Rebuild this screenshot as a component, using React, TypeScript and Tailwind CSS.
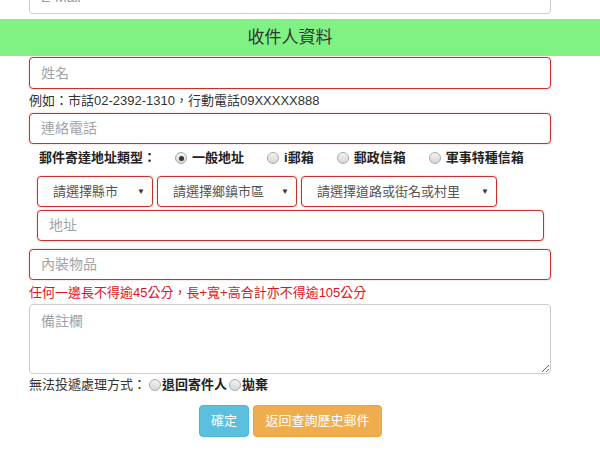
import React from "react";

const font = { fontFamily: '"Liberation Sans", "Noto Sans CJK TC", sans-serif' };

function Radio({ checked }: { checked?: boolean }) {
  return (
    <span className="inline-flex items-center justify-center w-[12px] h-[12px] rounded-full border border-[#a9a9a9] bg-gradient-to-b from-[#f4f4f4] to-[#d6d6d6] shrink-0">
      {checked && <span className="w-[5px] h-[5px] rounded-full bg-[#333]" />}
    </span>
  );
}

function RedInput({ placeholder, className = "" }: { placeholder: string; className?: string }) {
  return (
    <div
      className={`h-[31px] border border-[#c9302c] rounded-[4px] flex items-center px-[11px] text-[14px] text-[#a3a3a3] bg-white shadow-[0_0_2px_rgba(201,48,44,0.35)] ${className}`}
    >
      {placeholder}
    </div>
  );
}

function FakeSelect({ label, width }: { label: string; width: string }) {
  return (
    <div
      className={`${width} h-[31px] border border-[#c9302c] rounded-[4px] flex items-center justify-between pl-[15px] pr-[7px] text-[13px] text-[#555] bg-white shadow-[0_0_2px_rgba(201,48,44,0.35)]`}
    >
      <span>{label}</span>
      <span className="text-[8px] text-[#333]">▼</span>
    </div>
  );
}

export default function App() {
  const options = [
    { label: "一般地址", checked: true },
    { label: "i郵箱" },
    { label: "郵政信箱" },
    { label: "軍事特種信箱" },
  ];

  return (
    <div className="w-[600px] h-[450px] overflow-hidden bg-white text-[#333]" style={font}>
      {/* E-Mail (cut off at top) */}
      <div className="pl-[29px]">
        <div className="-mt-[20px] h-[34px] border border-[#ccc] rounded-[4px] flex items-center px-[11px] text-[14px] text-[#999] w-[522px]">
          E-Mail
        </div>
      </div>

      {/* Section header */}
      <div className="mt-[5px] h-[37px] bg-[#80f283] flex items-center justify-center text-[17px] text-[#333]">
        <span className="-ml-[20px]">收件人資料</span>
      </div>

      <div className="pl-[29px] w-[551px]">
        <RedInput placeholder="姓名" className="mt-[1px] h-[32px]" />

        <div className="h-[24px] leading-[24px] text-[13px]">例如：市話02-2392-1310，行動電話09XXXXX888</div>

        <RedInput placeholder="連絡電話" />

        {/* Address type radios */}
        <div className="h-[28px] flex items-center pl-[10px] text-[13px] font-bold text-[#222]">
          <span className="mr-[19px]">郵件寄達地址類型：</span>
          {options.map((o) => (
            <span key={o.label} className="flex items-center mr-[23px]">
              <Radio checked={o.checked} />
              <span className="ml-[5px]">{o.label}</span>
            </span>
          ))}
        </div>

        {/* City / district / road selects */}
        <div className="pl-[8px]">
          <div className="mt-[4px] flex gap-[4px]">
            <FakeSelect label="請選擇縣市" width="w-[116px]" />
            <FakeSelect label="請選擇鄉鎮市區" width="w-[140px]" />
            <FakeSelect label="請選擇道路或街名或村里" width="w-[196px]" />
          </div>
          <RedInput placeholder="地址" className="mt-[3px] w-[507px]" />
        </div>

        <RedInput placeholder="內裝物品" className="mt-[8px]" />

        <div className="h-[24px] leading-[26px] text-[13px] text-[#dd1419]">
          任何一邊長不得逾45公分，長+寬+高合計亦不得逾105公分
        </div>

        <textarea
          readOnly
          placeholder="備註欄"
          className="block w-[522px] h-[70px] border border-[#ccc] rounded-[4px] px-[11px] py-[6px] text-[14px] placeholder:text-[#a3a3a3] outline-none"
          style={font}
        />

        {/* Undeliverable handling */}
        <div className="h-[22px] flex items-center text-[13px]">
          <span className="text-[#333]">無法投遞處理方式：</span>
          <span className="ml-[3px] flex items-center">
            <Radio />
            <span className="font-bold text-[#222] ml-[1px]">退回寄件人</span>
          </span>
          <span className="ml-[2px] flex items-center">
            <Radio />
            <span className="font-bold text-[#222] ml-[1px]">拋棄</span>
          </span>
        </div>

        <div className="mt-[9px] flex gap-[4px] pl-[170px]">
          <button className="h-[32px] w-[50px] rounded-[4px] bg-[#5bc0de] border border-[#46b8da] text-white text-[13px]">
            確定
          </button>
          <button className="h-[32px] w-[129px] rounded-[4px] bg-[#f0ad4e] border border-[#eea236] text-white text-[13px]">
            返回查詢歷史郵件
          </button>
        </div>
      </div>
    </div>
  );
}
